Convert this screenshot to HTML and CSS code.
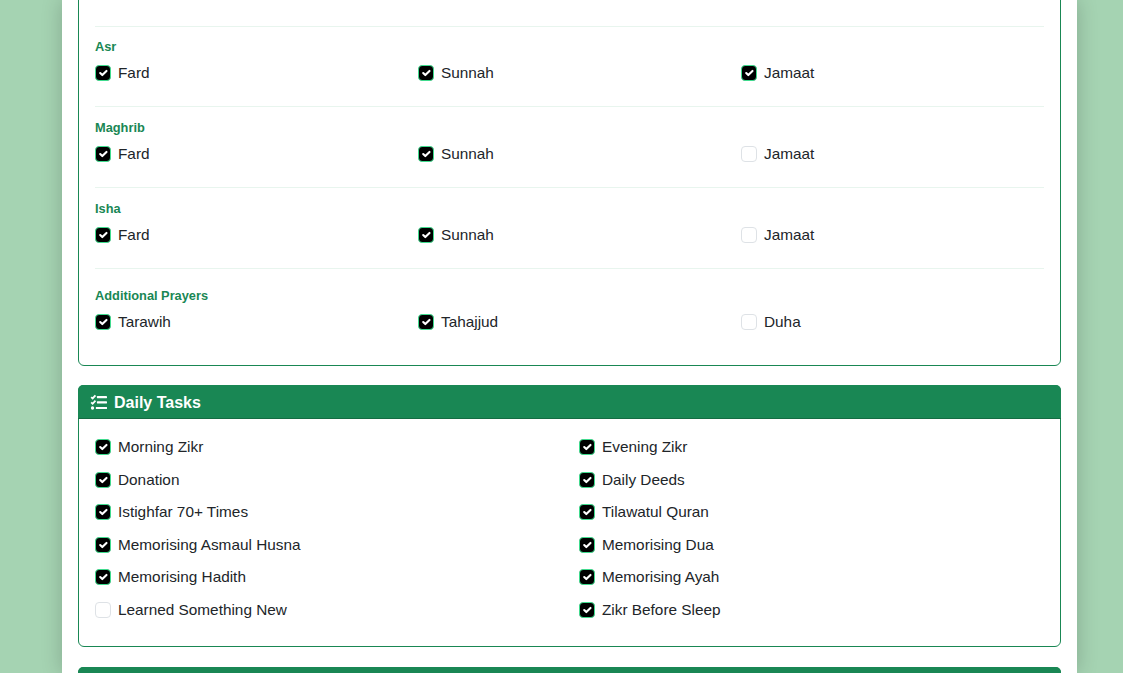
FILE: index.html
```html
<!DOCTYPE html>
<html lang="en">
<head>
<meta charset="utf-8">
<title>Daily Tracker</title>
<link rel="stylesheet" href="styles.css">
</head>
<body>
<main class="page">
  <section class="card card-clipped">
    <div class="card-body prayer-body">
      <div class="prayer-group prayer-lead"></div>
      <div class="prayer-group">
        <h3 class="prayer-name">Asr</h3>
        <div class="check-grid three">
          <label class="check"><input type="checkbox" checked><span>Fard</span></label>
          <label class="check"><input type="checkbox" checked><span>Sunnah</span></label>
          <label class="check"><input type="checkbox" checked><span>Jamaat</span></label>
        </div>
      </div>
      <div class="prayer-group">
        <h3 class="prayer-name">Maghrib</h3>
        <div class="check-grid three">
          <label class="check"><input type="checkbox" checked><span>Fard</span></label>
          <label class="check"><input type="checkbox" checked><span>Sunnah</span></label>
          <label class="check"><input type="checkbox"><span>Jamaat</span></label>
        </div>
      </div>
      <div class="prayer-group">
        <h3 class="prayer-name">Isha</h3>
        <div class="check-grid three">
          <label class="check"><input type="checkbox" checked><span>Fard</span></label>
          <label class="check"><input type="checkbox" checked><span>Sunnah</span></label>
          <label class="check"><input type="checkbox"><span>Jamaat</span></label>
        </div>
      </div>
      <div class="prayer-group prayer-extra">
        <h3 class="prayer-name">Additional Prayers</h3>
        <div class="check-grid three">
          <label class="check"><input type="checkbox" checked><span>Tarawih</span></label>
          <label class="check"><input type="checkbox" checked><span>Tahajjud</span></label>
          <label class="check"><input type="checkbox"><span>Duha</span></label>
        </div>
      </div>
    </div>
  </section>

  <section class="card">
    <header class="card-header">
      <svg class="card-icon" viewBox="0 0 512 512" aria-hidden="true">
        <path d="M36 92 l44 42 l84 -92" class="tick"/>
        <path d="M36 252 l44 42 l84 -92" class="tick"/>
        <circle cx="76" cy="422" r="50"/>
        <rect x="208" y="62" width="304" height="64" rx="12"/>
        <rect x="208" y="222" width="304" height="64" rx="12"/>
        <rect x="176" y="390" width="336" height="64" rx="12"/>
      </svg>
      <h2 class="card-title">Daily Tasks</h2>
    </header>
    <div class="card-body tasks-body">
      <div class="check-grid two">
        <label class="check"><input type="checkbox" checked><span>Morning Zikr</span></label>
        <label class="check"><input type="checkbox" checked><span>Evening Zikr</span></label>
        <label class="check"><input type="checkbox" checked><span>Donation</span></label>
        <label class="check"><input type="checkbox" checked><span>Daily Deeds</span></label>
        <label class="check"><input type="checkbox" checked><span>Istighfar 70+ Times</span></label>
        <label class="check"><input type="checkbox" checked><span>Tilawatul Quran</span></label>
        <label class="check"><input type="checkbox" checked><span>Memorising Asmaul Husna</span></label>
        <label class="check"><input type="checkbox" checked><span>Memorising Dua</span></label>
        <label class="check"><input type="checkbox" checked><span>Memorising Hadith</span></label>
        <label class="check"><input type="checkbox" checked><span>Memorising Ayah</span></label>
        <label class="check"><input type="checkbox"><span>Learned Something New</span></label>
        <label class="check"><input type="checkbox" checked><span>Zikr Before Sleep</span></label>
      </div>
    </div>
  </section>

  <section class="card card-next">
    <header class="card-header"></header>
  </section>
</main>
</body>
</html>
```
FILE: styles.css
```css
* { box-sizing: border-box; }

html, body {
  margin: 0;
  height: 100%;
  overflow: hidden;
}

body {
  background: #a5d3b2;
  font-family: "Liberation Sans", Arial, sans-serif;
  font-size: 15.35px;
  line-height: 22.5px;
  color: #212529;
}

.page {
  width: 1015px;
  height: 100%;
  margin-left: 62px;
  padding: 0 16px;
  background: #fff;
  box-shadow: 0 0 20px rgba(0, 0, 0, 0.2);
  display: flex;
  flex-direction: column;
  gap: 19px;
}

.card {
  flex: none;
  border: 1px solid #198754;
  border-radius: 6px;
  background: #fff;
}

.card-clipped {
  margin-top: -16.4px;
}

.card-next {
  margin-top: 1px;
}

.card-header {
  display: flex;
  align-items: center;
  gap: 7px;
  height: 34px;
  padding: 2px 12px 0;
  background: #198754;
  color: #fff;
  border-bottom: 1px solid #146c43;
  border-radius: 5px 5px 0 0;
  margin: -1px -1px 0;
}

.card-icon {
  width: 17px;
  height: 17px;
  fill: #fff;
  flex: none;
}

.card-icon .tick {
  fill: none;
  stroke: #fff;
  stroke-width: 54;
}

.card-title {
  margin: 0;
  font-size: 16px;
  font-weight: 700;
  line-height: 1.2;
}

.card-body {
  padding: 16px;
}

.prayer-group {
  padding: 10.8px 0 21.57px;
  border-bottom: 1px solid #e8f5ee;
}

.prayer-lead {
  height: 26px;
  padding: 0;
}

.prayer-extra {
  border-bottom: 0;
  padding: 17.5px 0 15.14px;
}

.prayer-name {
  margin: 0 0 4.8px;
  font-size: 12.8px;
  font-weight: 700;
  line-height: 20px;
  color: #198754;
}

.prayer-extra .prayer-name {
  margin-bottom: 5px;
}

.check-grid {
  display: grid;
  column-gap: 20px;
  row-gap: 10px;
}

.three { grid-template-columns: repeat(3, 1fr); }
.two {
  grid-template-columns: repeat(2, 1fr);
  column-gap: 19px;
}

.tasks-body {
  padding: 17.5px 16px 24.75px;
}

.check {
  display: flex;
  align-items: center;
  gap: 7px;
}

.check input {
  appearance: none;
  flex: none;
  width: 16px;
  height: 16px;
  margin: 0;
  border: 1px solid #dee2e6;
  border-radius: 4px;
  background-color: #fff;
}

.check input:checked {
  border-color: #3fdc8e;
  background-color: #000;
  background-image: url("data:image/svg+xml,%3csvg xmlns='http://www.w3.org/2000/svg' viewBox='0 0 20 20'%3e%3cpath fill='none' stroke='%23fff' stroke-linecap='round' stroke-linejoin='round' stroke-width='3' d='m6 10 3 3 6-6'/%3e%3c/svg%3e");
  background-size: 100% 100%;
}
```
